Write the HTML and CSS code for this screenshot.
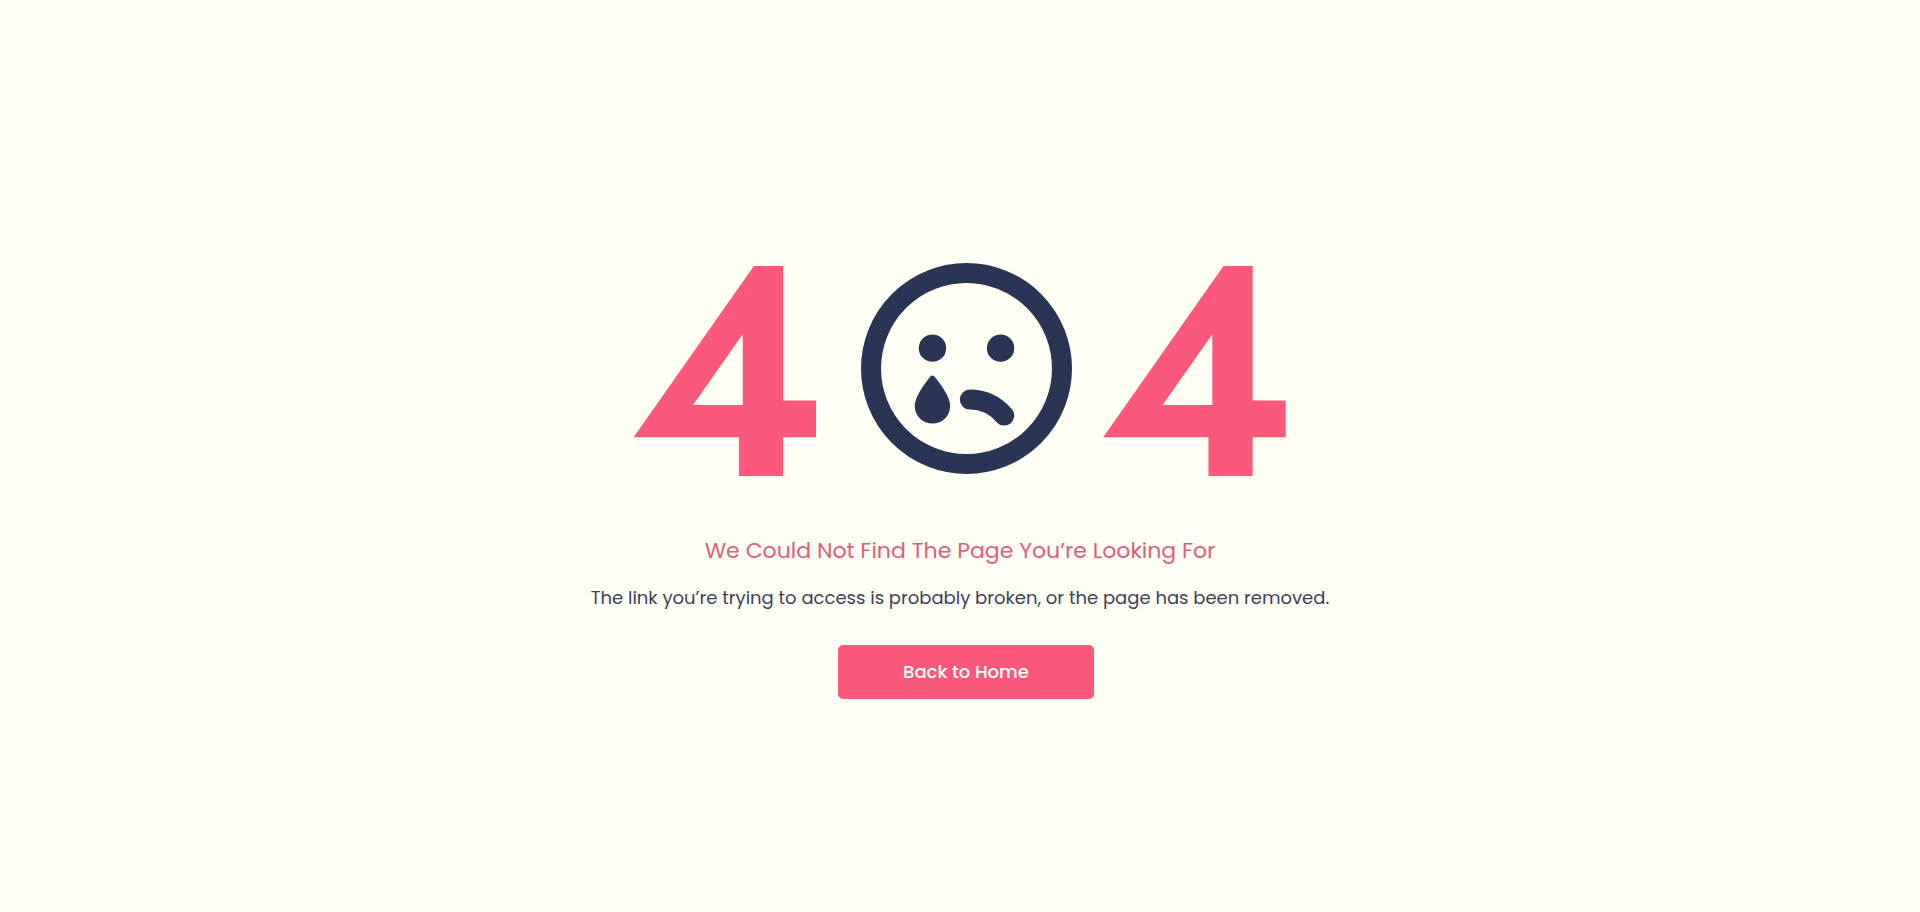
FILE: index.html
```html
<!DOCTYPE html>
<html lang="en">
<head>
  <meta charset="UTF-8">
  <meta name="viewport" content="width=device-width, initial-scale=1.0">
  <title>404 - Page Not Found</title>
  <link rel="stylesheet" href="styles.css">
</head>
<body>
  <main class="error-page">
    <h1 class="error-code" aria-label="404">
      <span class="digit">4</span>
      <svg class="face" viewBox="34 41 632 632" aria-hidden="true">
        <circle cx="350" cy="357" r="286" fill="none" stroke="currentColor" stroke-width="60"/>
        <circle cx="248" cy="296" r="41" fill="currentColor"/>
        <circle cx="452" cy="296" r="41" fill="currentColor"/>
        <!-- tear -->
        <path fill="currentColor" d="M242 381Q248 375 254 381C276 409 301 443 301 469C301 499 277 522 248 522C219 522 195 499 195 469C195 443 220 409 242 381Z"/>
        <!-- mouth -->
        <path fill="none" stroke="currentColor" stroke-width="60" stroke-linecap="round" d="M360 450C401 450 437 468 463 498"/>
      </svg>
      <span class="digit">4</span>
    </h1>
    <h2 class="title">We Could Not Find The Page You’re Looking For</h2>
    <p class="message">The link you’re trying to access is probably broken, or the page has been removed.</p>
    <button type="button" class="home-button">Back to Home</button>
  </main>
</body>
</html>
```
FILE: styles.css
```css
* {
  margin: 0;
  padding: 0;
  box-sizing: border-box;
}

body {
  min-height: 100vh;
  display: flex;
  justify-content: center;
  align-items: center;
  background-color: #fffef4;
  color: #2a3454;
  font-family: Poppins, Inter, sans-serif;
}

.error-page {
  display: flex;
  flex-direction: column;
  align-items: center;
  padding: 50px 16px 0;
  text-align: center;
}

.error-code {
  display: flex;
  align-items: flex-start;
  gap: 27px;
  padding-left: 6px;
  color: #fc587c;
  font-family: Jost, Inter, sans-serif;
  font-size: 300px;
  font-weight: 600;
  line-height: 218px;
}

.face {
  width: 211px;
  height: 211px;
  margin-left: 6px;
  color: #2a3454;
}

.title {
  margin-top: 54px;
  color: #dc607c;
  font-size: 22px;
  font-weight: 400;
  line-height: 32px;
}

.message {
  margin-top: 17px;
  color: #3a425a;
  font-size: 18px;
  line-height: 28px;
}

.home-button {
  width: 256px;
  height: 54px;
  margin: 33px 0 0 12px;
  padding-bottom: 2px;
  border: none;
  border-radius: 5px;
  background-color: #fc587c;
  color: #fff;
  font-family: inherit;
  font-size: 18px;
  font-weight: 500;
  cursor: pointer;
}

.home-button:hover {
  background-color: #e8466b;
}
```
